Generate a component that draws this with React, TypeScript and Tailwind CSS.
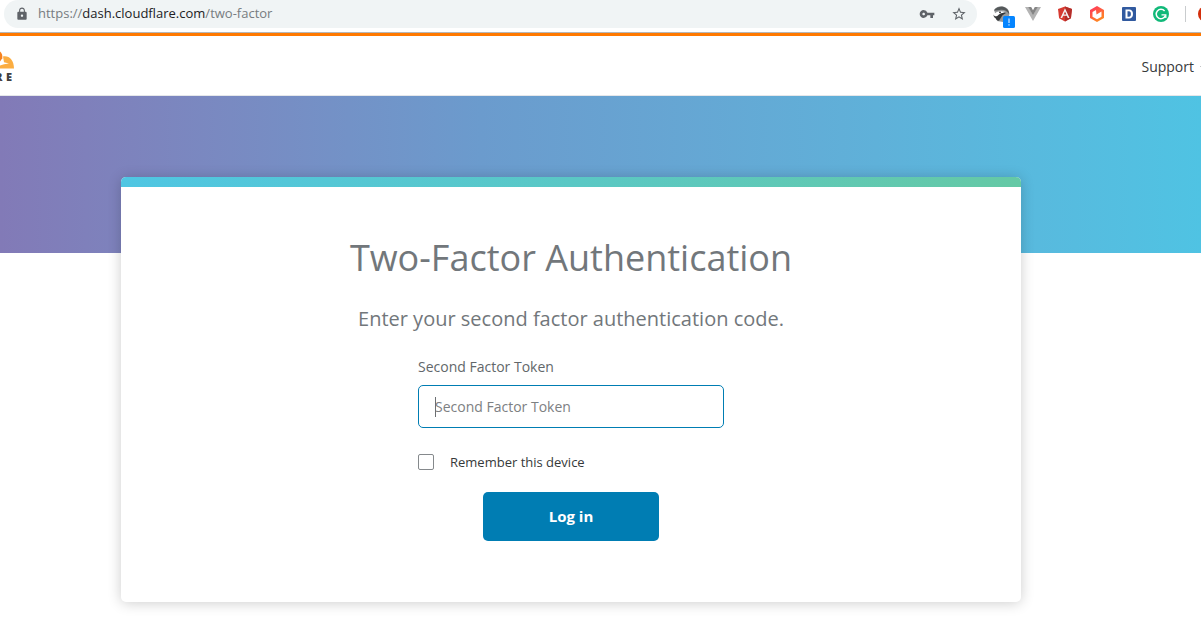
import { MdLock, MdStarBorder, MdVpnKey } from "react-icons/md";

function BirdIcon() {
  return (
    <span className="relative block size-5">
      <svg viewBox="0 0 20 20" className="size-5" aria-hidden="true">
        <path d="M3 6C5 3 8.500 1.800 12 2.400c4 .8 6.500 3.600 6.300 7.600-.2 4-3 7-6.300 8l-6-1L5 12Z" fill="#96999b" />
        <path d="M3 6.200C6 2.600 11.500 1.800 15 4.200c2.300 1.600 3.200 4 3.200 6-2-3.600-5.200-4.700-8.200-4.500C7.500 5.900 5 6.800 3 6.200Z" fill="#54585a" />
        <path d="M3.200 10C5 7.400 9 6.400 14 7.700c-1.500.8-4.500 1.800-6 4.800L5.500 14 3 12.500Z" fill="#fff" />
        <path d="M2.600 10.500c.4 1.800 1.900 2.300 4 1.300C8.500 9.800 11.500 8.300 15 9l-3.500 2.200L8 16.800c-1.600-.2-2.800-1-3.200-2.300C3.200 13.800 2.300 12.200 2.600 10.500Z" fill="#37393b" />
        <circle cx="9" cy="8.300" r="0.900" fill="#222" />
      </svg>
      <svg viewBox="0 0 12 12" className="absolute top-3 left-3 size-3" aria-hidden="true">
        <rect width="12" height="12" rx="1.500" fill="#0585ff" />
        <path d="M5.500 2.500h1v4.500h-1zM5.500 8.200h1v1.300h-1z" fill="#fff" />
      </svg>
    </span>
  );
}

function VueIcon() {
  return (
    <svg viewBox="0 0 16 16" className="size-4" aria-hidden="true">
      <path d="M0 1h3.600L8 8.700 12.400 1H16L8 15Z" fill="#b4b4b4" />
      <path d="M3.200 1h3L8 4.200 9.800 1h3L8 9.300Z" fill="#858585" />
    </svg>
  );
}

function AngularIcon() {
  return (
    <svg viewBox="0 0 16 16" className="size-4" aria-hidden="true">
      <path d="M8 .5 15 3l-1.100 9.300L8 15.500l-5.900-3.200L1 3Z" fill="#d73a31" />
      <path d="M8 .5 15 3l-1.100 9.300L8 15.500Z" fill="#b32e2a" />
      <path d="m8 2.200 4.500 9.800h-1.700l-.9-2.200H6.100L5.200 12H3.500Zm0 3.200L6.700 8.500h2.600Z" fill="#f4f4f4" />
    </svg>
  );
}

function HexagonIcon() {
  return (
    <svg viewBox="0 0 16 16" className="size-4" aria-hidden="true">
      <defs>
        <linearGradient id="hex" x1="0" y1="0" x2="0.6" y2="1">
          <stop offset="0" stopColor="#ff2d63" />
          <stop offset="1" stopColor="#ff8b21" />
        </linearGradient>
      </defs>
      <path d="m8 0 7 4v8l-7 4-7-4V4Z" fill="url(#hex)" />
      <path d="M7 4 3.500 6v4.800L8 13.300l4.500-2.500V5.500L7.500 8.500Z" fill="#fff" />
    </svg>
  );
}

function SquareDIcon() {
  return (
    <svg viewBox="0 0 16 16" className="size-4" aria-hidden="true">
      <rect x="1" y="1" width="14" height="14" rx="1" fill="#315a9f" />
      <path d="M4.500 3.500H8c2.600 0 4 1.700 4 4.500s-1.400 4.500-4 4.500H4.500Zm2 1.700v5.600H8c1.300 0 1.900-1 1.900-2.800S9.300 5.200 8 5.200Z" fill="#fff" />
    </svg>
  );
}

function CircleGIcon() {
  return (
    <svg viewBox="0 0 16 16" className="size-4" aria-hidden="true">
      <circle cx="8" cy="8" r="8" fill="#11b979" />
      <path d="M11.600 5A4.700 4.700 0 1 0 12.400 9.500" fill="none" stroke="#fff" strokeWidth="1.500" />
      <path d="M8.500 8.800h4.300v3.200" fill="none" stroke="#fff" strokeWidth="1.300" />
    </svg>
  );
}

const extensions = [BirdIcon, VueIcon, AngularIcon, HexagonIcon, SquareDIcon, CircleGIcon];

function BrowserBar() {
  return (
    <div className="flex h-[33px] items-start border-b border-[#b5b7b9] bg-white">
      <div className="ml-1 flex h-7 flex-1 items-center rounded-full bg-[#f0f4f5] pr-2.5 pl-[11px] text-[#5f6368]">
        <MdLock className="size-3.5 shrink-0" />
        <span className="ml-[9px] flex-1 text-[13px] text-[#777c80]">
          https://<span className="text-[#202124]">dash.cloudflare.com</span>/two-factor
        </span>
        <button type="button" aria-label="Saved passwords">
          <MdVpnKey className="size-4" />
        </button>
        <button type="button" aria-label="Bookmark this page" className="ml-4">
          <MdStarBorder className="size-4" />
        </button>
      </div>
      <div className="flex h-7 shrink-0 items-center pl-4">
        <div className="flex items-center gap-4">
          {extensions.map((Icon) => (
            <span key={Icon.name} className="flex w-4 justify-center">
              <Icon />
            </span>
          ))}
        </div>
        <span className="ml-4 h-4 w-px bg-[#c9ccce]" />
        <svg viewBox="0 0 3 16" className="ml-3 h-4 w-[3px]" aria-hidden="true">
          <circle cx="8" cy="8" r="8" fill="#d32f0c" />
        </svg>
      </div>
    </div>
  );
}

function Logo() {
  return (
    <a href="#home" aria-label="Home" className="block">
      <svg viewBox="0 0 15 34" className="h-[34px] w-[15px]" aria-hidden="true">
        <path d="M0 2.500C1.800 4 2.700 6.300 2.300 9.200L0 12.500Z" fill="#f6821f" />
        <path d="M3 7.500C9 6.300 14 11 14 19.500H0v-3l4-1.300 5-.7-5-1.300Z" fill="#fbad41" />
        <g fontSize="11" fontWeight="800" fill="#404041" fontFamily="Open Sans, sans-serif">
          <text x="-5" y="32">R</text>
          <text x="6" y="32">E</text>
        </g>
      </svg>
    </a>
  );
}

export default function App() {
  return (
    <div className="overflow-x-clip bg-white font-['Open_Sans','Noto_Sans',sans-serif] text-[#36393a]">
      <BrowserBar />
      <header className="flex h-[63px] items-center justify-between border-t-3 border-b border-t-[#ff7900] border-b-[#e5e7ea]">
        <Logo />
        <button type="button" className="flex items-center gap-1.5 pt-0.5 text-sm">
          Support
          <svg viewBox="0 0 2 4" className="h-1 w-px" aria-hidden="true">
            <path d="M0 0h2v2Z" fill="#8a8d90" />
          </svg>
        </button>
      </header>
      <div className="h-[157px] bg-linear-to-r from-[#827ab7] via-[#6b9bcd] via-40% to-[#4fc3e3]" />
      <main className="-mt-[76px] pr-[59px] pb-7">
        <section className="mx-auto max-w-[900px] overflow-hidden rounded-[5px] bg-white shadow-[0_1px_14px_rgba(0,0,0,0.2)]">
          <div className="h-2.5 bg-linear-to-r from-[#4fc6e3] to-[#65c9a5]" />
          <div className="flex flex-col items-center pt-11 pb-[61px]">
            <h1 className="text-4xl leading-[54px] text-[#72777b]">Two-Factor Authentication</h1>
            <p className="mt-5 text-xl leading-7 text-[#72777b]">Enter your second factor authentication code.</p>
            <form className="mt-[22px] flex w-[306px] flex-col" onSubmit={(e) => e.preventDefault()}>
              <label htmlFor="token" className="text-sm leading-6 text-[#62676a]">Second Factor Token</label>
              <div className="relative mt-1.5 flex">
                <input
                  id="token"
                  type="text"
                  placeholder="Second Factor Token"
                  className="peer h-[43px] w-full rounded-[5px] border border-[#007db3] px-4 text-sm outline-none placeholder:text-[#7d8082]"
                />
                <span className="pointer-events-none absolute top-3 left-[17px] h-5 w-px bg-[#6b6f72] peer-focus:hidden" />
              </div>
              <label className="mt-[22px] flex items-center gap-4 text-[13px] leading-6">
                <input type="checkbox" className="size-4 appearance-none rounded-xs border border-[#85898c] bg-white checked:bg-[#007db3]" />
                Remember this device
              </label>
              <button type="submit" className="mt-[18px] h-[49px] w-[176px] self-center rounded-[5px] bg-[#007db3] text-[15px] font-bold text-white">
                Log in
              </button>
            </form>
          </div>
        </section>
      </main>
    </div>
  );
}
